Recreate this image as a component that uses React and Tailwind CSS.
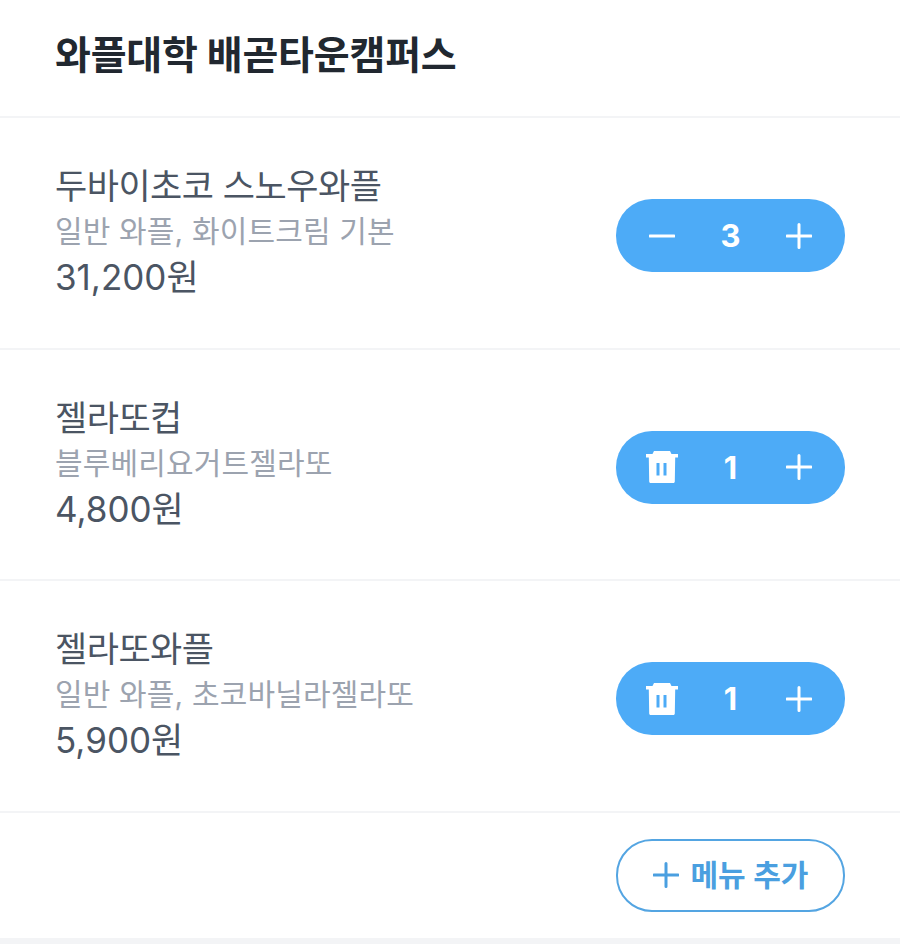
const FONT = "font-['Inter','Noto_Sans_CJK_KR',sans-serif]";

function Plus({ size = 26, stroke = 3, color = "#ffffff" }) {
  return (
    <svg width={size} height={size} viewBox="0 0 26 26" fill="none">
      <path d="M13 1.5V24.5M1 13H25" stroke={color} strokeWidth={stroke} strokeLinecap="round" />
    </svg>
  );
}

function Minus() {
  return (
    <svg width="26" height="26" viewBox="0 0 26 26" fill="none">
      <path d="M1 13H25" stroke="#ffffff" strokeWidth="3" strokeLinecap="round" />
    </svg>
  );
}

function Trash() {
  return (
    <svg width="34" height="34" viewBox="0 0 34 34" fill="none">
      <path d="M9 1H25L26.5 4H33V7.5H30.2L29.8 31.5C29.8 32.3 29.2 33 28.4 33H5.6C4.8 33 4.2 32.3 4.2 31.5L3.8 7.5H1V4H7.5Z" fill="#ffffff" />
      <rect x="11.5" y="13" width="3" height="12.5" fill="#4dabf7" />
      <rect x="18.5" y="13" width="3" height="12.5" fill="#4dabf7" />
    </svg>
  );
}

function Stepper({ count, trash }) {
  return (
    <div className="mt-[6px] flex h-[73px] w-[229px] items-center justify-between rounded-[36px] bg-[#4dabf7] px-[29px]">
      <div className="flex w-[34px] justify-center">{trash ? <Trash /> : <Minus />}</div>
      <span className="text-[31px] font-bold leading-none text-white">{count}</span>
      <div className="flex w-[34px] justify-center"><Plus /></div>
    </div>
  );
}

function Row({ name, desc, price, count, trash }) {
  return (
    <div className="flex h-[231.5px] items-center justify-between border-b-2 border-[#f3f4f6] pl-[55px] pr-[55px]">
      <div className="flex flex-col pb-[2px]">
        <span className="text-[35px] leading-[46px] tracking-[-0.5px] text-[#4b5563]">{name}</span>
        <span className="-mt-[1px] text-[30px] leading-[46px] tracking-[0.15px] text-[#9ca3af]">{desc}</span>
        <span className="text-[35px] leading-[46px] text-[#4b5563]">{price}</span>
      </div>
      <Stepper count={count} trash={trash} />
    </div>
  );
}

export default function App() {
  return (
    <div className={`${FONT} flex h-[944px] w-[900px] flex-col overflow-hidden bg-white`}>
      <div className="flex h-[118px] items-center border-b-2 border-[#f3f4f6] pb-[8px] pl-[55px]">
        <h1 className="text-[39px] font-bold leading-none tracking-[-0.2px] text-[#212830]">와플대학 배곧타운캠퍼스</h1>
      </div>
      <Row name="두바이초코 스노우와플" desc="일반 와플, 화이트크림 기본" price="31,200원" count="3" />
      <Row name="젤라또컵" desc="블루베리요거트젤라또" price="4,800원" count="1" trash />
      <Row name="젤라또와플" desc="일반 와플, 초코바닐라젤라또" price="5,900원" count="1" trash />
      <div className="flex h-[125px] items-start justify-end pr-[55px] pt-[26px]">
        <button className="flex h-[73px] w-[229px] items-center justify-center gap-[12px] rounded-[36px] border-[2.5px] border-[#54a5e2] text-[30px] font-semibold text-[#4a9fe0]">
          <Plus color="#4a9fe0" />
          <span className="leading-none">메뉴 추가</span>
        </button>
      </div>
      <div className="flex-1 bg-[#f3f4f6]" />
    </div>
  );
}
